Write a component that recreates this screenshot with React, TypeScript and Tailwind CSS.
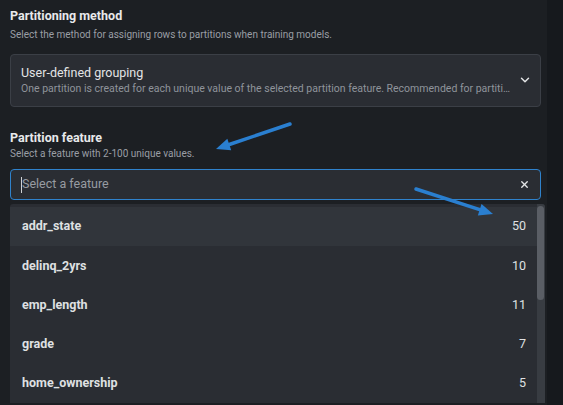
import { ChevronDown, X } from "lucide-react";

const FEATURES = [
  { name: "addr_state", count: 50 },
  { name: "delinq_2yrs", count: 10 },
  { name: "emp_length", count: 11 },
  { name: "grade", count: 7 },
  { name: "home_ownership", count: 5 },
];

function Arrow({ x1, y1, x2, y2 }: { x1: number; y1: number; x2: number; y2: number }) {
  const a = Math.atan2(y2 - y1, x2 - x1);
  const len = 14;
  const w = 6;
  const bx = x2 - len * Math.cos(a);
  const by = y2 - len * Math.sin(a);
  const px = -Math.sin(a) * w;
  const py = Math.cos(a) * w;
  return (
    <g>
      <line x1={x1} y1={y1} x2={bx} y2={by} stroke="#2a7fd0" strokeWidth={3.5} strokeLinecap="round" />
      <polygon points={`${x2},${y2} ${bx + px},${by + py} ${bx - px},${by - py}`} fill="#2a7fd0" />
    </g>
  );
}

export default function App() {
  return (
    <div
      className="relative w-[563px] h-[405px] overflow-hidden bg-[#16191d] flex"
      style={{ fontFamily: "Roboto, 'Liberation Sans', sans-serif" }}
    >
      <div className="w-[547px] h-full bg-[#1c1f23] pl-[10px] pr-[6px] pt-[8px]">
        <div className="w-[531px]">
          <h2 className="text-[12.5px] font-bold text-[#e8e9eb] leading-[16px]">Partitioning method</h2>
          <p className="text-[10px] text-[#9a9ea5] leading-[14px] mt-[4px]">
            Select the method for assigning rows to partitions when training models.
          </p>

          {/* method select */}
          <button className="mt-[12px] w-full h-[53px] bg-[#2a2d33] border border-[#3b3f46] rounded-[4px] pl-[10px] pr-[8px] flex items-center text-left">
            <div className="flex-1 min-w-0">
              <div className="text-[12.5px] text-[#e3e4e6] leading-[16px]">User-defined grouping</div>
              <div className="text-[10.5px] text-[#8f949b] leading-[15px] truncate">
                One partition is created for each unique value of the selected partition feature. Recommended for partitioning by customer or account.
              </div>
            </div>
            <ChevronDown className="w-[14px] h-[14px] text-[#e3e4e6] ml-[6px] -mt-[2px]" strokeWidth={2.5} />
          </button>

          <h2 className="mt-[23px] text-[12.5px] font-bold text-[#e8e9eb] leading-[16px]">Partition feature</h2>
          <p className="text-[10px] text-[#9a9ea5] leading-[14px] mt-[1px]">Select a feature with 2-100 unique values.</p>

          {/* feature search */}
          <div className="mt-[8px] w-full h-[31px] bg-[#2a2d33] border border-[#2f82cc] rounded-[4px] pl-[10px] pr-[10px] flex items-center">
            <span className="w-px h-[16px] bg-[#d0d2d5]" />
            <span className="flex-1 text-[12.5px] text-[#979ba2]">Select a feature</span>
            <X className="w-[11px] h-[11px] text-[#e3e4e6]" strokeWidth={3} />
          </div>
        </div>

        {/* options list */}
        <div className="mt-[4px] w-[535px] bg-[#2a2d33] flex rounded-t-[3px] overflow-hidden">
          <ul className="flex-1 pt-[3px]">
            {FEATURES.map((f, i) => (
              <li
                key={f.name}
                className={`h-[39.25px] flex items-center justify-between pl-[12px] pr-[11px] ${i === 0 ? "bg-[#31353b]" : ""}`}
              >
                <span className="text-[12.5px] font-bold text-[#dfe0e2]">{f.name}</span>
                <span className="text-[12.5px] text-[#dfe0e2]">{f.count}</span>
              </li>
            ))}
          </ul>
          <div className="w-[8px] bg-[#383c42] pt-[2px]">
            <div className="w-[7px] h-[94px] rounded-full bg-[#5a5e65]" />
          </div>
        </div>
      </div>

      <svg className="absolute inset-0 pointer-events-none" width={563} height={405}>
        <Arrow x1={290} y1={124} x2={216} y2={149} />
        <Arrow x1={416} y1={189} x2={493} y2={214} />
      </svg>
    </div>
  );
}
